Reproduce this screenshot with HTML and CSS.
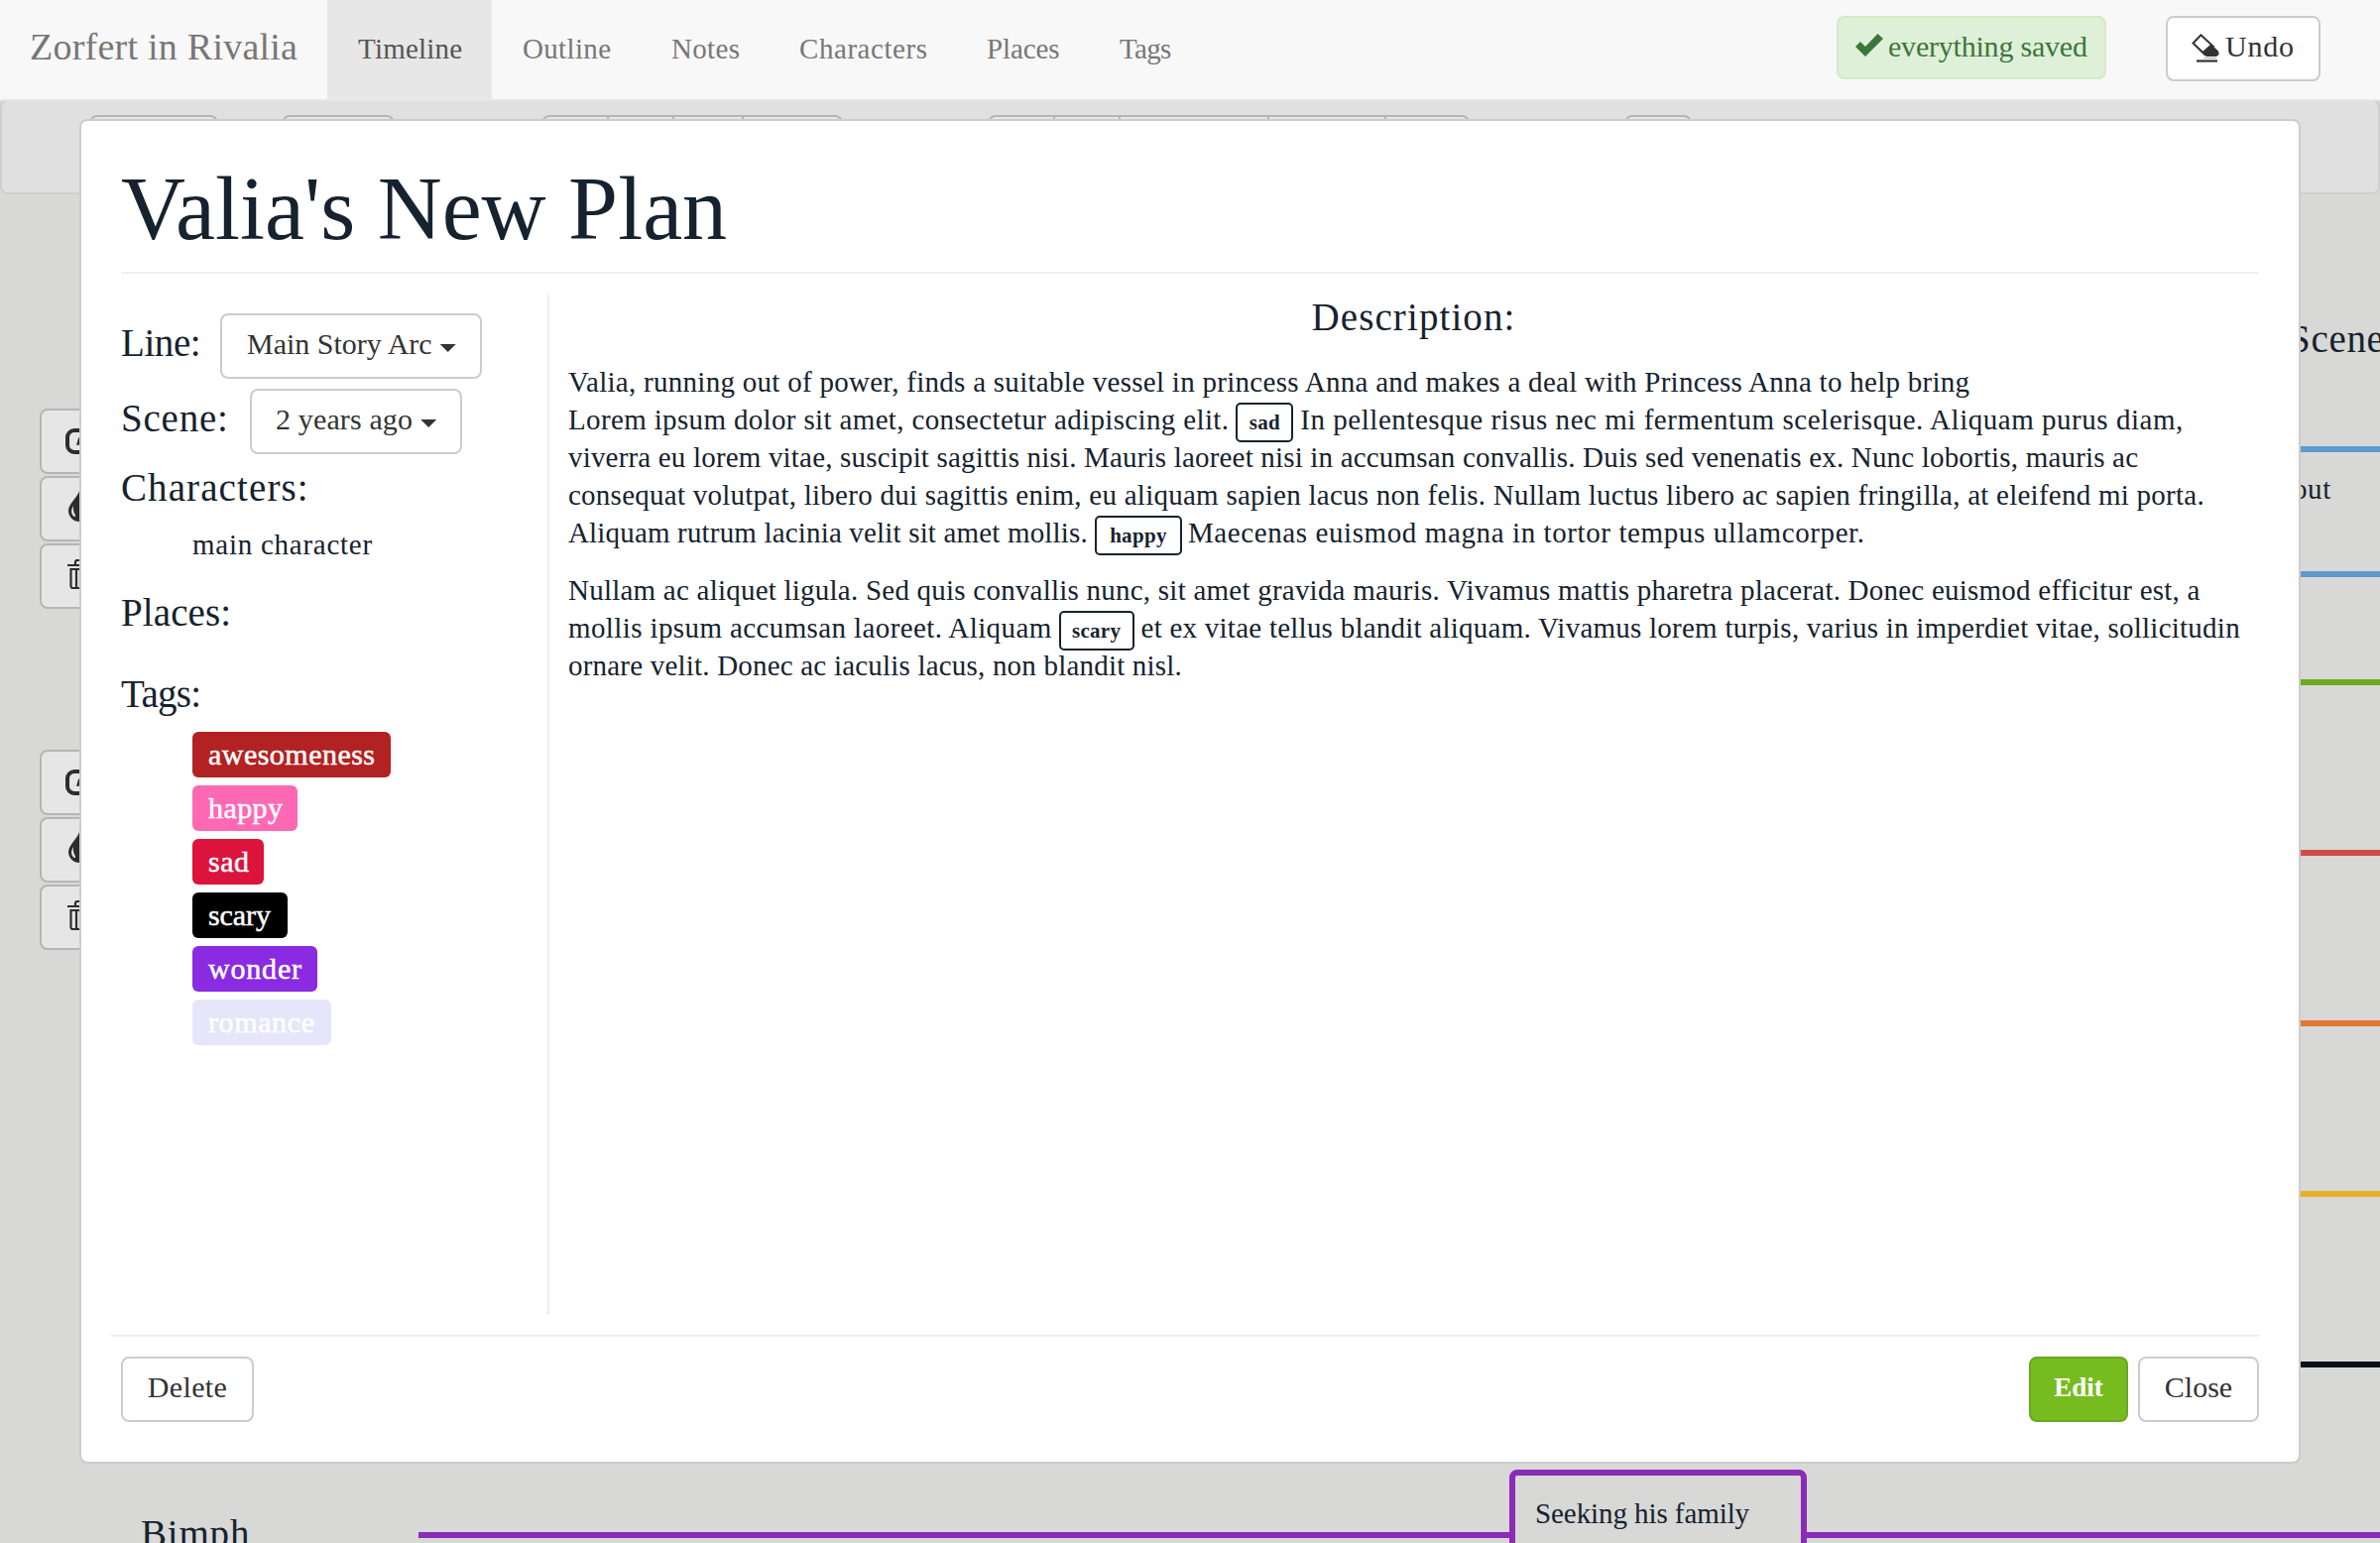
FILE: index.html
```
<!DOCTYPE html>
<html lang="en">
<head>
<meta charset="utf-8">
<title>Zorfert in Rivalia</title>
<link rel="stylesheet" href="styles.css">
</head>
<body>
<svg class="defs" width="0" height="0">
  <symbol id="i-edit" viewBox="0 0 36 30"><path d="M22 4H9a7 7 0 0 0-7 7v8a7 7 0 0 0 7 7h11a7 7 0 0 0 7-7v-2" fill="none" stroke="currentColor" stroke-width="4"/><path d="M11 19l2-7L25 1l6 5-12 12z" fill="currentColor"/></symbol>
  <symbol id="i-drop" viewBox="0 0 24 32"><path d="M12 0c2 7 11 13 11 20a11 11 0 0 1-22 0C1 13 10 7 12 0z" fill="currentColor"/><path d="M6 15c-4 6-1 11 2 11 1-2-3-4-2-11z" fill="#e6e6e6"/></symbol>
  <symbol id="i-trash" viewBox="0 0 26 30"><path d="M0 6h26M8 5V3q0-2 2-2h6q2 0 2 2v2M3.500 10h19v17q0 2-2 2h-15q-2 0-2-2zM9 10v18M13 10v18M17.500 10v18" fill="none" stroke="currentColor" stroke-width="2.200"/></symbol>
</svg>

<nav class="navbar">
  <div class="brand">Zorfert in Rivalia</div>
  <a class="nav-item timeline active">Timeline</a>
  <a class="nav-item outline">Outline</a>
  <a class="nav-item notes">Notes</a>
  <a class="nav-item characters">Characters</a>
  <a class="nav-item places">Places</a>
  <a class="nav-item tags">Tags</a>
  <div class="nav-right">
    <div class="alert"><svg width="28" height="23" viewBox="0 0 28 23"><path d="M0 13l5-5 5 5L22.500 0 28 5 10 23z" fill="currentColor"/></svg><span>everything saved</span></div>
    <div class="btn undo"><svg width="28" height="29" viewBox="0 0 28 29"><path d="M1.500 9.500L9.500 1.300 22 13l-8.500 8z" fill="none" stroke="currentColor" stroke-width="2"/><path d="M10.500 18.500L19.500 10.500 27 17.500q1 2 0 4l-2 1.500H15z" fill="currentColor"/><path d="M12.500 24.500H25" stroke="#aaa"/><path d="M5 27.500H26" stroke="currentColor" stroke-width="2.200"/></svg><span>Undo</span></div>
  </div>
</nav>

<main class="timeline-view">
  <div class="subnav">
    <div class="group g-1"><i></i></div>
    <div class="group g-2"><i></i></div>
    <div class="group g-3"><i></i><i></i><i></i><i></i></div>
    <div class="group g-4"><i></i><i></i><i></i><i></i><i></i></div>
    <div class="group g-5"><i></i></div>
  </div>
  <div class="tools tools-1">
    <div class="tool"><svg class="edit"><use href="#i-edit"/></svg></div>
    <div class="tool"><svg class="drop"><use href="#i-drop"/></svg></div>
    <div class="tool"><svg class="trash"><use href="#i-trash"/></svg></div>
  </div>
  <div class="tools tools-2">
    <div class="tool"><svg class="edit"><use href="#i-edit"/></svg></div>
    <div class="tool"><svg class="drop"><use href="#i-drop"/></svg></div>
    <div class="tool"><svg class="trash"><use href="#i-trash"/></svg></div>
  </div>
  <div class="scene-title">Scene</div>
  <div class="card-text">out</div>
  <div class="line line-blue-1"></div>
  <div class="line line-blue-2"></div>
  <div class="line line-green"></div>
  <div class="line line-red"></div>
  <div class="line line-orange"></div>
  <div class="line line-yellow"></div>
  <div class="line line-black"></div>
  <div class="line line-purple"></div>
  <div class="line-title">Bimph</div>
  <div class="card">Seeking his family</div>
</main>

<section class="modal">
  <h1>Valia's New Plan</h1>
  <div class="modal-body">
    <aside class="details">
      <div class="field"><span class="label l-line">Line:</span><div class="btn dropdown d-line"><span>Main Story Arc</span><b class="caret"></b></div></div>
      <div class="field field-scene"><span class="label l-scene">Scene:</span><div class="btn dropdown d-scene"><span>2 years ago</span><b class="caret"></b></div></div>
      <h2 class="h-characters">Characters:</h2>
      <p class="character">main character</p>
      <h2 class="h-places">Places:</h2>
      <h2 class="h-tags">Tags:</h2>
      <ul class="tag-list">
        <li class="awesomeness">awesomeness</li>
        <li class="happy">happy</li>
        <li class="sad">sad</li>
        <li class="scary">scary</li>
        <li class="wonder">wonder</li>
        <li class="romance">romance</li>
      </ul>
    </aside>
    <article class="description">
      <h2>Description:</h2>
      <div class="para para-1">
        <div><span>Valia, running out of power, finds a suitable vessel in princess Anna and makes a deal with Princess Anna to help bring</span></div>
        <div><span>Lorem ipsum dolor sit amet, consectetur adipiscing elit.</span><b class="chip chip-sad">sad</b><span class="after">In pellentesque risus nec mi fermentum scelerisque. Aliquam purus diam,</span></div>
        <div><span>viverra eu lorem vitae, suscipit sagittis nisi. Mauris laoreet nisi in accumsan convallis. Duis sed venenatis ex. Nunc lobortis, mauris ac</span></div>
        <div><span>consequat volutpat, libero dui sagittis enim, eu aliquam sapien lacus non felis. Nullam luctus libero ac sapien fringilla, at eleifend mi porta.</span></div>
        <div><span>Aliquam rutrum lacinia velit sit amet mollis.</span><b class="chip chip-happy">happy</b><span class="after">Maecenas euismod magna in tortor tempus ullamcorper.</span></div>
      </div>
      <div class="para para-2">
        <div><span>Nullam ac aliquet ligula. Sed quis convallis nunc, sit amet gravida mauris. Vivamus mattis pharetra placerat. Donec euismod efficitur est, a</span></div>
        <div><span>mollis ipsum accumsan laoreet. Aliquam</span><b class="chip chip-scary">scary</b><span class="after">et ex vitae tellus blandit aliquam. Vivamus lorem turpis, varius in imperdiet vitae, sollicitudin</span></div>
        <div><span>ornare velit. Donec ac iaculis lacus, non blandit nisl.</span></div>
      </div>
    </article>
  </div>
  <footer>
    <div class="btn delete">Delete</div>
    <div class="btn edit-btn">Edit</div>
    <div class="btn close">Close</div>
  </footer>
</section>
</body>
</html>
```
FILE: styles.css
```
* { box-sizing: border-box; }
html, body { margin: 0; height: 1556px; overflow: hidden; }
body {
  position: relative;
  background: #d8d8d6;
  color: #16222e;
  font: 29px/38px "Liberation Serif", serif;
  white-space: nowrap;
}
h1, h2, p, ul { margin: 0; padding: 0; font-weight: 400; }
.defs { position: absolute; }

/* Navbar */
.navbar {
  position: relative;
  z-index: 1;
  display: flex;
  height: 102px;
  background: #f8f8f8;
  border-bottom: 2px solid #e7e7e7;
  color: #777;
}
.brand { width: 330px; padding-left: 30px; font-size: 38px; line-height: 95px; letter-spacing: .24px; }
.nav-item { padding-left: 31px; line-height: 98px; height: 100px; }
.active { background: #e7e7e7; color: #555; }
.timeline { width: 166px; letter-spacing: .22px; }
.outline { width: 150px; letter-spacing: .34px; }
.notes { width: 130px; letter-spacing: .34px; }
.characters { width: 189px; padding-left: 30px; letter-spacing: .56px; }
.places { width: 134px; padding-left: 30px; letter-spacing: -.1px; }
.tags { width: 112px; padding-left: 30px; letter-spacing: -.7px; }
.nav-right { display: flex; align-items: flex-start; margin-left: auto; padding: 16px 60px 0 0; gap: 60px; }
.alert {
  display: flex;
  width: 272px;
  height: 64px;
  padding: 0 0 0 17px;
  border: 2px solid #d6e9c6;
  border-radius: 8px;
  background: #dff0d8;
  color: #3c763d;
  font-size: 30px;
  line-height: 57px;
  letter-spacing: -.21px;
}
.alert svg { margin: 16px 5px 0 0; }
.btn {
  height: 66px;
  border: 2px solid #ccc;
  border-radius: 8px;
  background: #fff;
  color: #333;
  font-size: 30px;
  line-height: 58px;
}
.undo { display: flex; width: 156px; padding-left: 24px; letter-spacing: .78px; }
.undo svg { margin: 16px 6px 0 0; }

/* Timeline behind the dialog */
.subnav {
  position: relative;
  height: 96px;
  margin-top: -2px;
  border: 2px solid #cfcfcf;
  border-radius: 8px;
  background: #e0e0e0;
}
.group {
  position: absolute;
  top: 14px;
  display: flex;
  height: 66px;
  border: 2px solid #b5b5b5;
  border-radius: 8px;
  background: #e6e6e6;
}
.group i { border-right: 2px solid #b5b5b5; }
.group i:last-child { border: 0; }
.g-1 { left: 88px; width: 130px; }
.g-2 { left: 282px; width: 114px; }
.g-3 { left: 544px; width: 304px; }
.g-3 i { width: 66px; }
.g-3 i:nth-child(3) { width: 70px; }
.g-4 { left: 994px; width: 486px; }
.g-4 i { width: 66px; }
.g-4 i:nth-child(3) { width: 150px; }
.g-4 i:nth-child(4) { width: 118px; }
.g-5 { left: 1636px; width: 68px; }
.tools { position: absolute; left: 40px; display: grid; gap: 2px; }
.tools-1 { top: 412px; }
.tools-2 { top: 756px; }
.tool { width: 88px; height: 66px; border: 2px solid #b5b5b5; border-radius: 8px; background: #e6e6e6; color: #2d2d2d; }
.tool svg { display: block; }
.edit { width: 36px; height: 30px; margin: 16px 0 0 24px; }
.drop { width: 24px; height: 32px; margin: 13px 0 0 26px; }
.trash { width: 26px; height: 30px; margin: 14px 0 0 26px; }
.line { position: absolute; left: 422px; right: 0; height: 6px; }
.line-blue-1 { top: 450px; background: #5f9acf; }
.line-blue-2 { top: 576px; background: #5f9acf; }
.line-green { top: 685px; background: #6cab1e; }
.line-red { top: 857px; background: #d04d47; }
.line-orange { top: 1029px; background: #e3752f; }
.line-yellow { top: 1201px; background: #e6b12a; }
.line-black { top: 1373px; background: #0b1117; }
.line-purple { top: 1545px; background: #8a2cb6; }
.scene-title { position: absolute; left: 2308px; top: 323px; font-size: 39px; letter-spacing: .7px; }
.card-text { position: absolute; left: 2312px; top: 474px; letter-spacing: .6px; }
.line-title { position: absolute; left: 142px; top: 1528px; font-size: 39px; letter-spacing: .8px; }
.card {
  position: absolute;
  left: 1522px;
  top: 1482px;
  width: 300px;
  height: 140px;
  padding: 19px 0 0 20px;
  border: 6px solid #8a2cb6;
  border-radius: 8px;
  background: #d8d8d6;
  letter-spacing: -.08px;
}

/* Scene dialog */
.modal {
  position: absolute;
  z-index: 2;
  left: 80px;
  top: 120px;
  width: 2240px;
  height: 1356px;
  padding: 34px 40px 40px;
  border: 2px solid #ccc;
  border-radius: 8px;
  background: #fff;
}
h1 { height: 120px; border-bottom: 2px solid #eee; font-size: 90px; line-height: 110px; }
.modal-body { display: flex; height: 1030px; margin: 20px 0; }
.details { width: 432px; padding-top: 20px; border-right: 2px solid #eee; }
h2, .label { font-size: 39px; line-height: 42px; height: 40px; }
.field { display: flex; height: 66px; }
.field-scene { margin-top: 10px; }
.label { line-height: 60px; }
.l-line { width: 100px; letter-spacing: -.4px; }
.l-scene { width: 130px; letter-spacing: .8px; }
.dropdown { display: flex; padding-left: 25px; }
.d-line { width: 264px; }
.d-scene { width: 214px; padding-left: 24px; letter-spacing: .14px; }
.caret { width: 16px; height: 8px; margin: 29px 0 0 8px; background: #333; clip-path: polygon(0 0, 100% 0, 50% 100%); }
.h-characters { margin-top: 13px; letter-spacing: 1.1px; }
.character { margin: 19px 0 0 72px; letter-spacing: .74px; }
.h-places { margin-top: 29px; letter-spacing: .1px; }
.h-tags { margin-top: 42px; letter-spacing: -.7px; }
.tag-list { display: grid; justify-items: start; gap: 8px; margin: 19px 0 0 72px; list-style: none; }
.tag-list li { height: 46px; padding-left: 16px; border-radius: 6px; color: #fff; font-size: 30px; line-height: 46px; -webkit-text-stroke: .5px #fff; }
.awesomeness { width: 200px; background: #b22222; letter-spacing: .47px; }
.happy { width: 106px; background: #ff69b4; letter-spacing: .42px; }
.sad { width: 72px; background: #dc143c; letter-spacing: .5px; }
.scary { width: 96px; background: #000; letter-spacing: -.07px; }
.wonder { width: 126px; background: #8a2be2; letter-spacing: .81px; }
.romance { width: 140px; background: #e6e6fa; letter-spacing: .62px; }
.description { flex: 1; padding: 3px 0 0 19px; }
.description h2 { text-align: center; letter-spacing: 1.1px; }
.para-1 { margin-top: 27px; }
.para-2 { margin-top: 20px; }
.para > div { display: flex; height: 38px; }
.para-1 div:nth-child(1) { letter-spacing: .28px; }
.para-1 div:nth-child(2) { letter-spacing: .35px; }
.para-1 div:nth-child(2) .after { letter-spacing: .53px; }
.para-1 div:nth-child(3) { letter-spacing: .18px; }
.para-1 div:nth-child(4) { letter-spacing: .25px; }
.para-1 div:nth-child(5) { letter-spacing: .17px; }
.para-1 div:nth-child(5) .after { letter-spacing: .6px; }
.para-2 div:nth-child(1) { letter-spacing: .23px; }
.para-2 div:nth-child(2) { letter-spacing: .39px; }
.para-2 div:nth-child(2) .after { letter-spacing: .24px; }
.para-2 div:nth-child(3) { letter-spacing: .2px; }
.chip {
  height: 40px;
  margin: 2px 7px 0;
  border: 2px solid #16222e;
  border-radius: 5px;
  font-size: 21px;
  line-height: 37px;
  text-align: center;
  letter-spacing: .3px;
}
.chip-sad { width: 58px; }
.chip-happy { width: 88px; margin-right: 6px; }
.chip-scary { width: 76px; }
footer { display: flex; height: 88px; margin-left: -10px; padding: 20px 0 0 10px; border-top: 2px solid #eee; }
footer .btn { text-align: center; }
.delete { width: 134px; letter-spacing: .34px; }
.edit-btn { width: 100px; margin: 0 10px 0 auto; border-color: #69a81e; background: #77bc1f; color: #fff; font-size: 27px; font-weight: 700; }
.close { width: 122px; }
```
